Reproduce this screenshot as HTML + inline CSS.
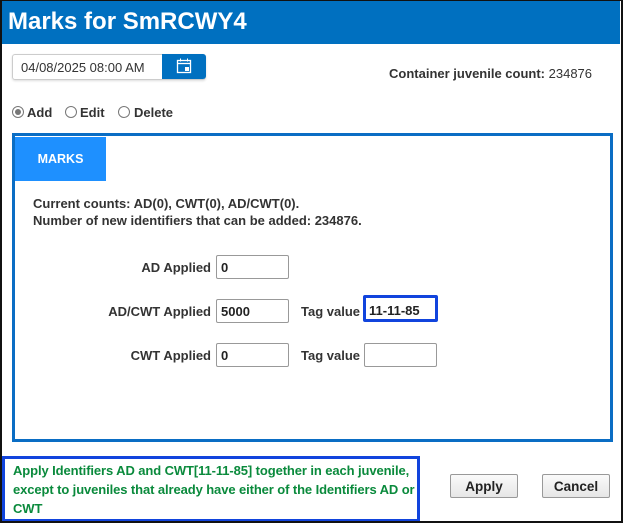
<!DOCTYPE html>
<html><head><meta charset="utf-8"><style>
*{box-sizing:border-box;margin:0;padding:0}
body{width:623px;height:523px;background:#fff;font-family:"Liberation Sans",Arial,sans-serif;position:relative;overflow:hidden;color:#333}
.frame{position:absolute;left:0;top:0;width:623px;height:523px;border:2px solid #111;border-top:1px solid #111}
.hdr{position:absolute;left:2px;top:1px;width:618px;height:43px;background:#0070c0;color:#fff;font-weight:bold;font-size:24px;padding:7px 0 0 6px}
.a{position:absolute}
.date{left:12px;top:54px;width:194px;height:26px;border:1px solid #ccc;border-radius:3px;box-shadow:0 1px 2px #ddd;font-size:13px;padding:5px 0 0 8px;color:#333}
.dbtn{left:162px;top:54px;width:44px;height:25px;background:#0070c0;border-radius:0 3px 3px 0}
.b{font-weight:bold;font-size:13px}
.radio{position:absolute;top:1px;width:12px;height:12px;border:1px solid #777;border-radius:50%;background:#fff}
.radio.on:after{content:"";position:absolute;left:2px;top:2px;width:6px;height:6px;border-radius:50%;background:#777}
.panel{left:12px;top:133px;width:601px;height:309px;border:3px solid #0a6dc4}
.tab{left:15px;top:137px;width:91px;height:44px;background:#1e90ff;color:#fff;font-weight:bold;font-size:12.5px;text-align:center;padding-top:15px}
.inp{position:absolute;width:73px;height:24px;border:1px solid #999;border-radius:2px;font-weight:bold;font-size:13px;padding:4px 0 0 4px;color:#222}
.lbl{position:absolute;font-weight:bold;font-size:13px;color:#333;text-align:right}
.note{left:2px;top:456px;width:418px;height:66px;border:3px solid #1144dd;color:#0a8a3c;font-weight:bold;font-size:13px;line-height:19px;padding:2px 0 0 8px;letter-spacing:-0.1px}
.btn{position:absolute;top:474px;width:68px;height:24px;border:1px solid #999;border-radius:2px;background:linear-gradient(#fafafa,#e6e6e6);font-size:13.5px;font-weight:bold;text-align:center;padding-top:4px;color:#222}
</style></head><body>
<div class="hdr">Marks for SmRCWY4</div>
<div class="a date">04/08/2025 08:00 AM</div>
<div class="a dbtn"><svg width="44" height="25" viewBox="0 0 44 25"><rect x="15.5" y="6.5" width="13" height="12" fill="none" stroke="#fff" stroke-width="1.3"/><line x1="15.5" y1="9.5" x2="28.5" y2="9.5" stroke="#fff" stroke-width="1.3"/><line x1="18.5" y1="4.5" x2="18.5" y2="7.5" stroke="#fff"/><line x1="25.5" y1="4.5" x2="25.5" y2="7.5" stroke="#fff"/><rect x="23" y="13" width="4" height="4" fill="#fff"/></svg></div>
<div class="a" style="left:389px;top:66px;font-size:13px"><b>Container juvenile count:</b> 234876</div>
<div class="a b" style="left:0;top:105px;width:200px;height:16px">
<span class="radio on" style="left:12px"></span><span class="a" style="left:27px">Add</span>
<span class="radio" style="left:65px"></span><span class="a" style="left:80px">Edit</span>
<span class="radio" style="left:118px"></span><span class="a" style="left:134px">Delete</span></div>
<div class="a panel"></div>
<div class="a tab">MARKS</div>
<div class="a b" style="left:33px;top:195px;line-height:17px">Current counts: AD(0), CWT(0), AD/CWT(0).<br>Number of new identifiers that can be added: 234876.</div>
<div class="lbl" style="left:100px;width:111px;top:260px">AD Applied</div>
<div class="inp" style="left:216px;top:255px">0</div>
<div class="lbl" style="left:90px;width:121px;top:304px">AD/CWT Applied</div>
<div class="inp" style="left:216px;top:299px">5000</div>
<div class="lbl" style="left:301px;top:304px">Tag value</div>
<div class="inp" style="left:363px;top:295px;width:75px;height:27px;border:3px solid #1144dd;padding:5px 0 0 3px">11-11-85</div>
<div class="lbl" style="left:100px;width:111px;top:348px">CWT Applied</div>
<div class="inp" style="left:216px;top:343px">0</div>
<div class="lbl" style="left:301px;top:348px">Tag value</div>
<div class="inp" style="left:364px;top:343px">&nbsp;</div>
<div class="a note">Apply Identifiers AD and CWT[11-11-85] together in each juvenile, except to juveniles that already have either of the Identifiers AD or CWT</div>
<div class="btn" style="left:450px">Apply</div>
<div class="btn" style="left:542px">Cancel</div>
<div class="frame"></div>
</body></html>
